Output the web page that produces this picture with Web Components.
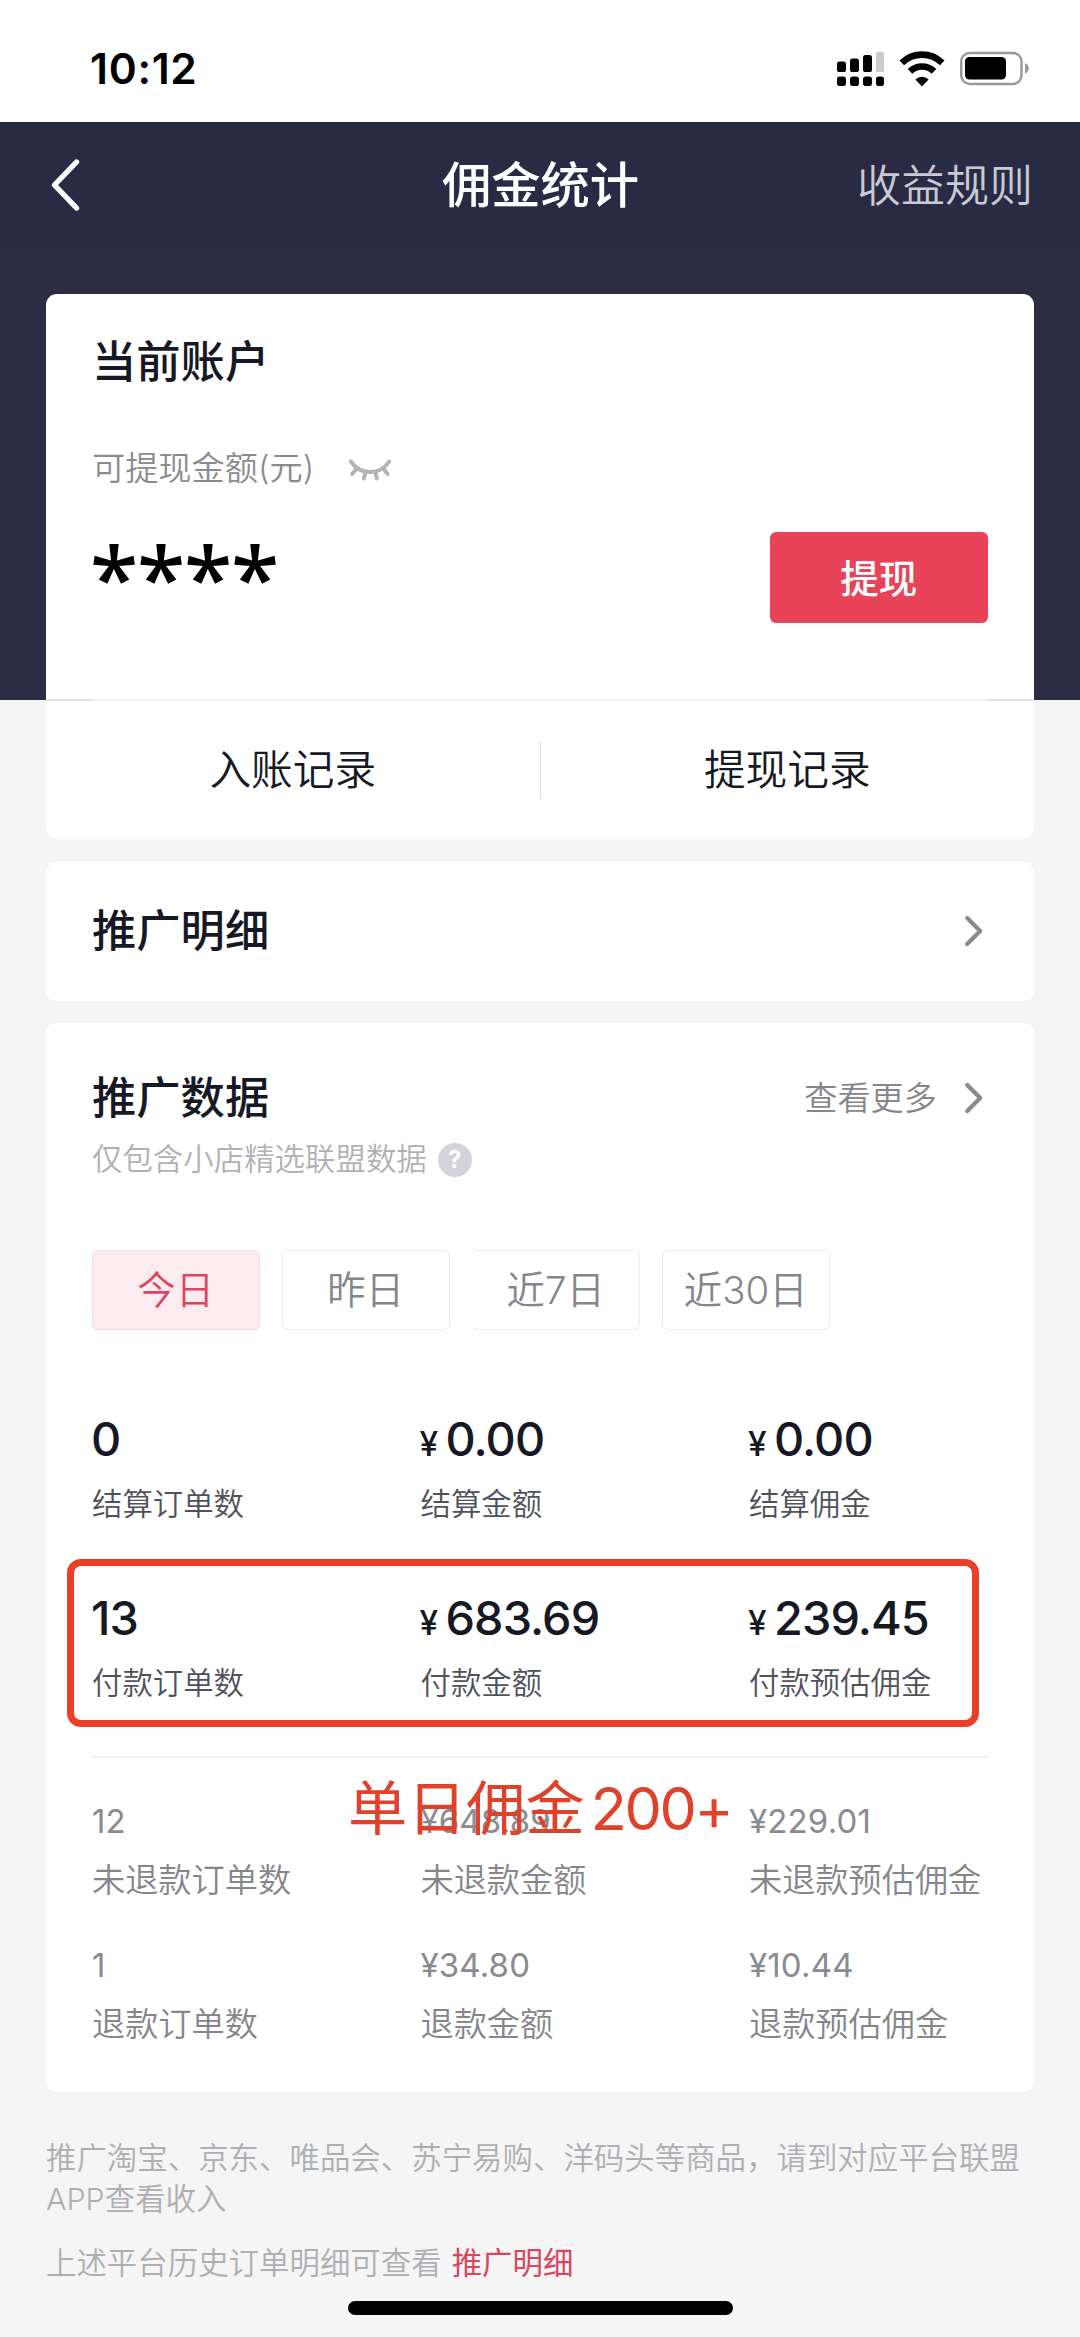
<!DOCTYPE html>
<html lang="zh-CN">
<head>
<meta charset="utf-8">
<title>佣金统计</title>
<style>
  html, body { margin: 0; padding: 0; }
  body {
    width: 1080px; height: 2337px; overflow: hidden; background: #f5f5f5; color: #161823;
    font-family: Inter, "Noto Sans CJK SC", sans-serif;
    -webkit-font-smoothing: antialiased;
  }
</style>
</head>
<body>
<commission-page></commission-page>
<script>
const define = (name, html, setup) => {
  const tpl = document.createElement('template');
  tpl.innerHTML = html;
  customElements.define(name, class extends HTMLElement {
    constructor() {
      super();
      this.attachShadow({ mode: 'open' }).append(tpl.content.cloneNode(true));
    }
    connectedCallback() { if (setup) setup(this, this.shadowRoot); }
  });
};

define('status-bar', `
<style>
  :host { display: flex; height: 122px; background: #fff; box-sizing: border-box; padding: 0 50px 0 90px; justify-content: space-between; align-items: flex-start; color: #000; }
  .time { margin-top: 44px; font-size: 42.5px; line-height: 50px; font-weight: 600; letter-spacing: 0.7px; }
  .icons { display: flex; margin-top: 50px; gap: 15px; }
  svg { display: block; }
</style>
<div class="time">10:12</div>
<div class="icons">
  <svg width="48" height="37" viewBox="-1 0 48 37">
    <rect x="0" y="11.5" width="9" height="10.5" rx="2.6"/><rect x="13" y="8.5" width="9" height="13.5" rx="2.6"/><rect x="26" y="5" width="9" height="17" rx="2.6"/><rect x="39" y="1.5" width="8" height="20.5" rx="2.6" fill="#ccc"/>
    <rect x="0" y="26.5" width="9" height="9.5" rx="2.8"/><rect x="13" y="26.5" width="9" height="9.5" rx="2.8"/><rect x="26" y="26.5" width="9" height="9.5" rx="2.8"/><rect x="39" y="26.5" width="8" height="9.5" rx="2.8"/>
  </svg>
  <svg width="46" height="37" viewBox="0 0 46 37">
    <g fill="none" stroke="#000" stroke-width="6.6"><path d="M2.8 12.9A28.8 28.8 0 0 1 43.2 12.9"/><path d="M11 21.3A17.4 17.4 0 0 1 35 21.3"/></g>
    <path d="M23 36.500l-6.600-7a9.400 9.400 0 0 1 13.200 0z"/>
  </svg>
  <svg width="70" height="37" viewBox="0 0 70 37">
    <rect x="1.2" y="3" width="60.3" height="31" rx="8.5" fill="none" stroke="#999" stroke-width="2.4"/>
    <rect x="5" y="7" width="41" height="22.500" rx="4.5"/>
    <path d="M65 13.3c5.2 2 5.2 8.200 0 10.200z" fill="#999"/>
  </svg>
</div>`);

define('nav-bar', `
<style>
  :host { display: grid; grid-template-columns: 1fr auto 1fr; align-items: center; height: 124px; background: #292b45; color: #fff; padding: 0 47px 0 48px; box-sizing: border-box; }
  svg { display: block; margin-top: 2px; }
  .title { font-size: 49.3px; line-height: 60px; font-weight: 500; margin-top: 2px; }
  .rule { justify-self: end; font-size: 44px; line-height: 60px; font-weight: 350; color: #c9cad3; margin-top: 3px; }
</style>
<svg width="34" height="56" viewBox="0 0 34 56"><path d="M28.500 5L6.500 28L28.500 51" fill="none" stroke="#fff" stroke-width="5.400" stroke-linecap="round" stroke-linejoin="round"/></svg>
<div class="title">佣金统计</div>
<div class="rule">收益规则</div>`);

define('panel-card', `
<style>:host { display: block; background: #fff; border-radius: 11px; box-sizing: border-box; }</style>
<slot></slot>`);

define('chevron-icon', `
<style>:host { display: block; width: 20px; height: 34px; } svg { display: block; }</style>
<svg width="20" height="34" viewBox="0 0 20 34"><path d="M3.200 4L16.200 17L3.200 30" fill="none" stroke="#8a8b91" stroke-width="4.200" stroke-linecap="round" stroke-linejoin="round"/></svg>`);

define('eye-closed', `
<style>:host { display: block; width: 44px; height: 24px; } svg { display: block; }</style>
<svg width="44" height="24" viewBox="0 0 44 24"><g fill="none" stroke="#b2b3b6" stroke-width="4" stroke-linecap="round"><path d="M2.800 3.500C12.500 17.600 32 17.600 41.200 3.500"/><path d="M8 11.500L4 16M36 11.500L39.600 16M17.500 15L15.800 20.500M27.500 15L28.800 20.500"/></g></svg>`);

define('account-card', `
<style>
  :host { display: block; height: 545px; }
  .top { height: 405px; box-sizing: border-box; padding: 38px 46px 0; }
  .line { height: 2px; background: linear-gradient(90deg, #e4e4e5 46px, #f0f0f1 46px, #f0f0f1 942px, #e4e4e5 942px); }
  h2 { margin: 0; font-size: 44.3px; line-height: 60px; font-weight: 500; }
  .cap { display: flex; align-items: center; margin-top: 56px; font-size: 33.200px; line-height: 40px; font-weight: 350; color: #8a8b91; }
  eye-closed { margin: 4px 0 0 34px; }
  .row { display: flex; justify-content: space-between; margin-top: 44px; }
  .stars { font-family: "Noto Sans", sans-serif; font-weight: 500; font-size: 88px; line-height: 100px; height: 91px; color: #000; margin: -6px 0 6px -2px; letter-spacing: -1.200px; }
  .btn { width: 218.500px; height: 91px; line-height: 94px; border-radius: 6px; background: #e94359; color: #fff; text-align: center; font-size: 38.500px; font-weight: 500; }
  .links { display: flex; align-items: center; height: 138px; font-size: 41.700px; font-weight: 350; }
  .links span { flex: 1; text-align: center; line-height: 60px; }
  .links i { width: 1px; height: 58px; background: #dedee0; }
</style>
<div class="top">
  <h2>当前账户</h2>
  <div class="cap"><span>可提现金额(元)</span><eye-closed></eye-closed></div>
  <div class="row"><div class="stars">****</div><div class="btn">提现</div></div>
</div>
<div class="line"></div>
<div class="links"><span>入账记录</span><i></i><span>提现记录</span></div>`);

define('section-head', `
<style>
  :host { display: flex; align-items: center; height: 60px; }
  h2 { flex: 1; margin: 0; font-size: 44.3px; line-height: 60px; font-weight: 500; }
  .more { font-size: 33.200px; line-height: 40px; font-weight: 350; color: #85868c; margin-right: 27px; }
  chevron-icon { margin-right: 4px; }
</style>
<h2><slot></slot></h2><span class="more"><slot name="more"></slot></span><chevron-icon></chevron-icon>`);

define('range-tab', `
<style>
  :host { display: block; box-sizing: border-box; width: 167.500px; height: 80px; line-height: 79px; border: 1.500px solid #ebebed; border-radius: 6px; text-align: center; font-size: 38.400px; font-weight: 350; color: #85868c; white-space: nowrap; }
  :host([active]) { background: #fcecef; border-color: #f8dde2; color: #dc4560; }
  :host([open-left]) { border-left-color: transparent; }
</style><slot></slot>`);

define('stat-cell', `
<style>
  :host { display: flex; flex-direction: column; }
  .v { display: flex; align-items: baseline; height: 56px; margin-left: -1px; font-size: 46.800px; line-height: 56px; font-weight: 500; letter-spacing: -0.900px; }
  .y { font-size: 33.500px; width: 26px; letter-spacing: 0; }
  .l { margin-top: 17px; font-size: 30.400px; line-height: 40px; font-weight: 350; color: #50515b; white-space: nowrap; }
  :host([minor]) .v { height: 40px; margin-left: 0; font-size: 33px; line-height: 40px; font-weight: 380; color: #8a8b91; letter-spacing: 0.200px; }
  :host([minor]) .y { width: auto; font-size: inherit; }
  :host([minor]) .l { margin-top: 19px; font-size: 33.200px; color: #85868c; }
</style>
<div class="v"><span class="y">¥</span><span class="n"></span></div><div class="l"></div>`, (el, root) => {
  if (!el.hasAttribute('money')) root.querySelector('.y').remove();
  root.querySelector('.n').textContent = el.getAttribute('value');
  root.querySelector('.l').textContent = el.getAttribute('label');
});

define('stat-row', `
<style>
  :host { display: grid; grid-template-columns: 328.500px 328.500px 1fr; position: relative; }
  :host([marked])::after { content: ""; position: absolute; left: -25px; top: -31px; width: 912px; height: 168px; box-sizing: border-box; border: 7.500px solid #e83f26; border-radius: 14px; }
</style><slot></slot>`);

define('data-card', `
<style>
  :host { display: block; height: 1068.500px; box-sizing: border-box; padding: 45px 46px 0; }
  .sub { display: flex; align-items: center; margin-top: 11px; height: 40px; font-size: 30.450px; line-height: 40px; font-weight: 350; color: #b0b1b5; }
  .q { display: block; width: 34px; height: 34px; margin: 2px 0 0 11px; border-radius: 50%; background: #d3d4d9; color: #fff; font-weight: 700; font-size: 24px; line-height: 34px; text-align: center; }
  .tabs { display: flex; gap: 22.500px; margin-top: 71px; }
  .major { margin-top: 81px; display: flex; flex-direction: column; gap: 65.500px; }
  .minor { position: relative; margin-top: 53px; border-top: 2px solid #f1f1f2; padding-top: 43px; display: flex; flex-direction: column; gap: 45px; }
  .note { position: absolute; left: 256px; top: 11px; font-size: 59.200px; line-height: 80px; color: #e0412a; white-space: nowrap; font-weight: 400; }
  .note b { font-weight: 400; margin-left: 6px; letter-spacing: -2.300px; }
</style>
<section-head>推广数据<span slot="more">查看更多</span></section-head>
<div class="sub"><span>仅包含小店精选联盟数据</span><span class="q">?</span></div>
<div class="tabs"><range-tab active>今日</range-tab><range-tab>昨日</range-tab><range-tab open-left>近7日</range-tab><range-tab>近30日</range-tab></div>
<div class="major">
  <stat-row><stat-cell value="0" label="结算订单数"></stat-cell><stat-cell money value="0.00" label="结算金额"></stat-cell><stat-cell money value="0.00" label="结算佣金"></stat-cell></stat-row>
  <stat-row marked><stat-cell value="13" label="付款订单数"></stat-cell><stat-cell money value="683.69" label="付款金额"></stat-cell><stat-cell money value="239.45" label="付款预估佣金"></stat-cell></stat-row>
</div>
<div class="minor">
  <stat-row><stat-cell minor value="12" label="未退款订单数"></stat-cell><stat-cell minor money value="648.89" label="未退款金额"></stat-cell><stat-cell minor money value="229.01" label="未退款预估佣金"></stat-cell></stat-row>
  <stat-row><stat-cell minor value="1" label="退款订单数"></stat-cell><stat-cell minor money value="34.80" label="退款金额"></stat-cell><stat-cell minor money value="10.44" label="退款预估佣金"></stat-cell></stat-row>
  <div class="note">单日佣金<b>200+</b></div>
</div>`);

define('page-foot', `
<style>
  :host { display: flex; flex-direction: column; padding-top: 23.500px; font-size: 30.450px; line-height: 41.500px; font-weight: 350; color: #aeafb3; }
  p { margin: 0; }
  p + p { margin-top: 22.500px; }
  a { color: #dc4560; margin-left: 10px; font-weight: 400; }
</style>
<p>推广淘宝、京东、唯品会、苏宁易购、洋码头等商品，请到对应平台联盟<br>APP查看收入</p>
<p>上述平台历史订单明细可查看<a>推广明细</a></p>`);

define('home-indicator', `
<style>:host { display: block; width: 385px; height: 14px; margin: 16px auto 0; border-radius: 7px; background: #000; }</style>`);

define('commission-page', `
<style>
  :host { display: flex; flex-direction: column; }
  main { display: flex; flex-direction: column; gap: 22.500px; padding: 48px 46px 0; background: linear-gradient(#2b2b42 454.500px, #f5f5f5 454.500px); }
  .link { height: 139px; padding: 39.500px 46px 0; }
</style>
<status-bar></status-bar>
<nav-bar></nav-bar>
<main>
  <panel-card><account-card></account-card></panel-card>
  <panel-card class="link"><section-head>推广明细</section-head></panel-card>
  <panel-card><data-card></data-card></panel-card>
  <page-foot></page-foot>
</main>
<home-indicator></home-indicator>`);
</script>
</body>
</html>
